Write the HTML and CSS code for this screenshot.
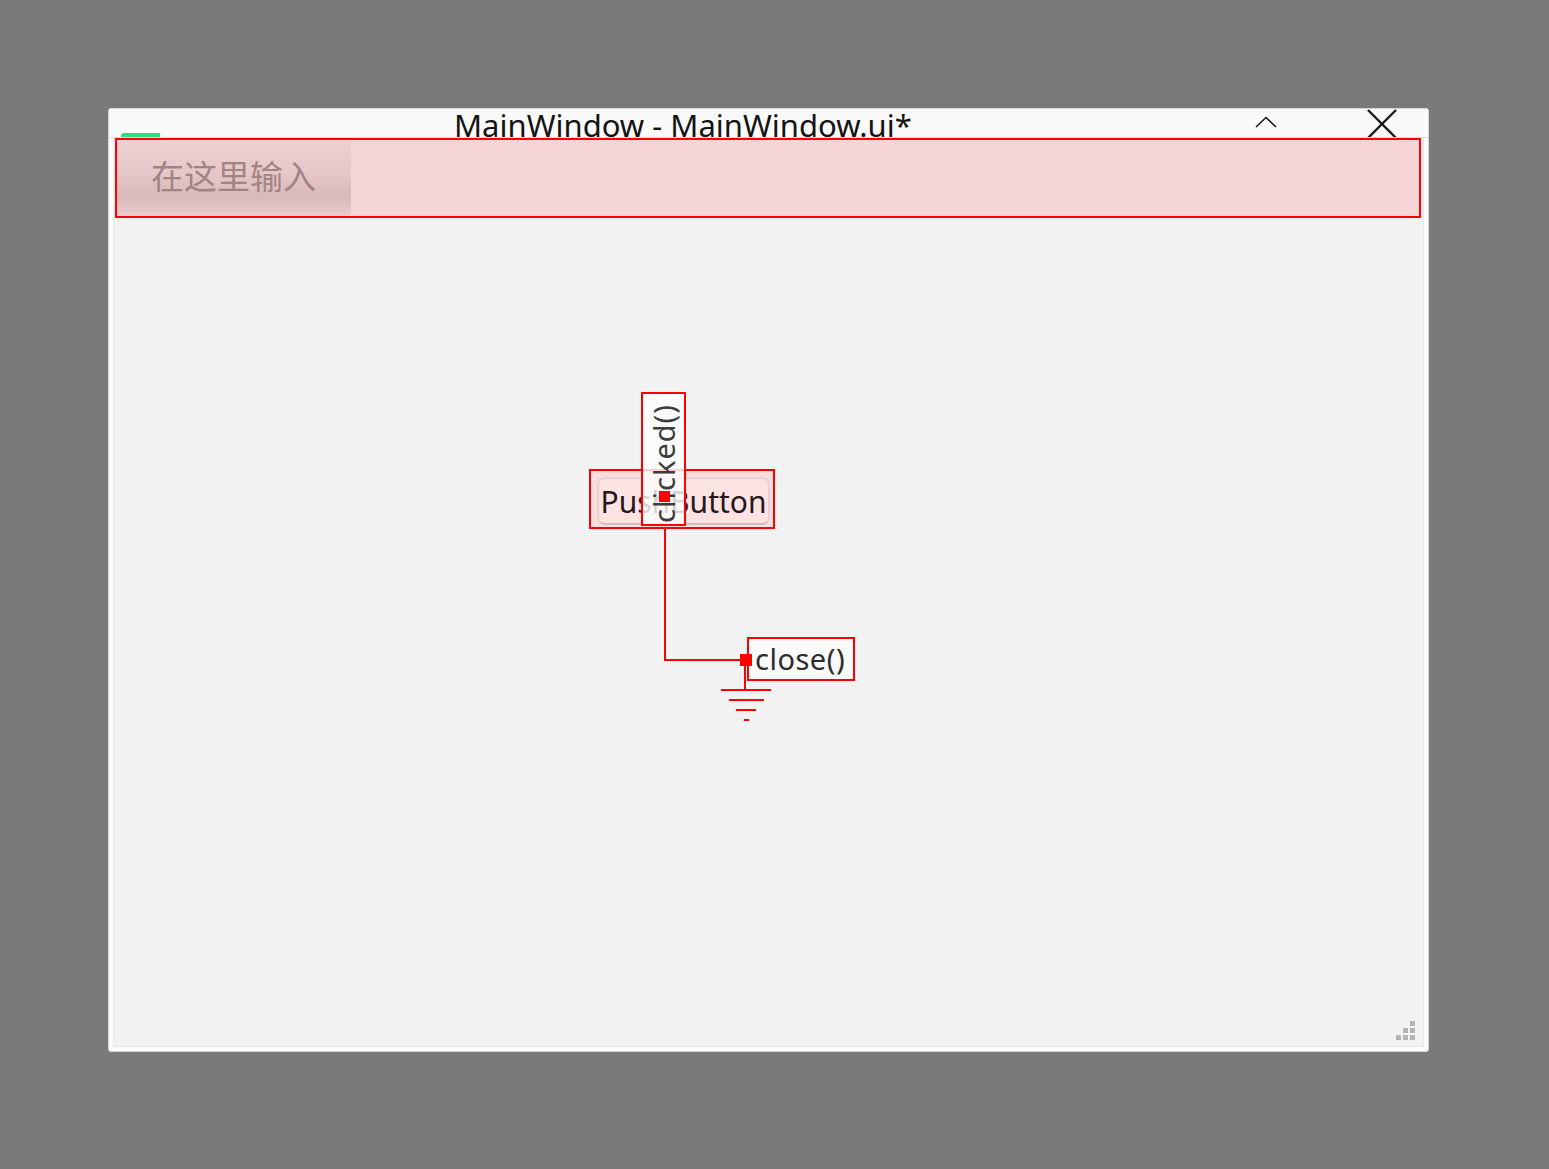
FILE: index.html
```html
<!DOCTYPE html>
<html lang="zh-CN">
<head>
    <meta charset="UTF-8">
    <title>MainWindow - MainWindow.ui*</title>
    <link rel="stylesheet" href="styles.css">
</head>
<body>
    <div class="window">
        <div class="titlebar">
            <span class="app-icon"></span>
            <span class="title">MainWindow - MainWindow.ui*</span>
            <span class="btn-max">
                <svg width="22" height="12" viewBox="0 0 22 12"><path d="M1 11 L11 1.5 L21 11" fill="none" stroke="#1a1a1a" stroke-width="1.6"/></svg>
            </span>
            <span class="btn-close">
                <svg width="30" height="30" viewBox="0 0 30 30"><path d="M1 1 L29 29 M29 1 L1 29" fill="none" stroke="#1a1a1a" stroke-width="2.4"/></svg>
            </span>
        </div>
        <div class="client">
            <div class="menubar">
                <div class="menu-item">在这里输入</div>
            </div>
            <div class="canvas">
                <div class="widget-box">
                    <div class="push-button">PushButton</div>
                </div>
                <div class="signal-label"><span>clicked()</span></div>
                <div class="pin pin-signal"></div>
                <div class="wire wire-v"></div>
                <div class="wire wire-h"></div>
                <div class="slot-label">close()</div>
                <div class="pin pin-slot"></div>
                <svg class="ground" width="52" height="56" viewBox="0 0 52 56">
                    <rect x="23" y="0" width="2" height="25" fill="#ff0000"/>
                    <rect x="0" y="23" width="50" height="2" fill="#ff0000"/>
                    <rect x="8" y="33" width="35" height="2" fill="#ff0000"/>
                    <rect x="15" y="43" width="20" height="2" fill="#ff0000"/>
                    <rect x="23" y="53" width="5" height="2" fill="#ff0000"/>
                </svg>
            </div>
            <svg class="grip" width="20" height="20" viewBox="0 0 20 20">
                <rect x="14" y="0" width="5" height="5" fill="#b4b4b4"/>
                <rect x="7" y="7" width="5" height="5" fill="#b4b4b4"/>
                <rect x="14" y="7" width="5" height="5" fill="#b4b4b4"/>
                <rect x="0" y="14" width="5" height="5" fill="#b4b4b4"/>
                <rect x="7" y="14" width="5" height="5" fill="#b4b4b4"/>
                <rect x="14" y="14" width="5" height="5" fill="#b4b4b4"/>
            </svg>
        </div>
    </div>
</body>
</html>
```

FILE: styles.css
```css
body {
    margin: 0;
    padding: 0;
    background-color: rgb(122, 122, 122);
    font-family: "Noto Sans", "Open Sans", Arial, sans-serif;
    min-height: 100vh;
    overflow: hidden;
}
.window {
    margin: 108px 0 0 108px;
    width: 1321px;
    height: 944px;
    box-sizing: border-box;
    display: flex;
    flex-direction: column;
    background-color: rgb(253, 253, 253);
    border: 1px solid rgb(214, 214, 214);
    border-radius: 3px;
}
.titlebar {
    height: 28px;
    display: flex;
    align-items: flex-end;
    background-color: rgb(250, 250, 250);
    border-bottom: 1px solid rgb(216, 216, 216);
    overflow: hidden;
    flex-shrink: 0;
}
.app-icon {
    width: 39px;
    height: 4px;
    margin-left: 12px;
    background-color: rgb(41, 221, 130);
    border-radius: 3px 0 0 0;
    align-self: flex-end;
}
.title {
    margin-left: 294px;
    font-size: 31px;
    line-height: 34px;
    margin-bottom: -5px;
    color: rgb(20, 20, 20);
    white-space: nowrap;
}
.btn-max {
    margin-left: auto;
    align-self: flex-start;
    margin-top: 7px;
    line-height: 0;
}
.btn-close {
    margin-left: 90px;
    margin-right: 31px;
    align-self: flex-start;
    line-height: 0;
}
.client {
    position: relative;
    flex: 1;
    display: flex;
    flex-direction: column;
    margin: 0 4px 4px 4px;
    background-color: rgb(242, 242, 242);
    border: 1px solid rgb(232, 232, 232);
    border-top: none;
}
.menubar {
    margin: 0 2px 0 1px;
    height: 80px;
    box-sizing: border-box;
    display: flex;
    background-color: rgb(245, 213, 215);
    border: 2px solid rgb(255, 0, 0);
}
.menu-item {
    width: 234px;
    display: flex;
    align-items: center;
    padding: 0 0 6px 34px;
    box-sizing: border-box;
    font-family: "Noto Sans CJK SC", "Noto Sans", sans-serif;
    font-size: 33px;
    color: rgb(163, 132, 133);
    background: linear-gradient(to bottom, rgb(239, 208, 210) 0%, rgb(230, 199, 201) 45%, rgb(216, 184, 185) 75%, rgb(236, 205, 207) 100%);
}
.canvas {
    position: relative;
    flex: 1;
}
.widget-box {
    position: absolute;
    left: 475px;
    top: 251px;
    width: 186px;
    height: 60px;
    box-sizing: border-box;
    border: 2px solid rgb(255, 0, 0);
    background-color: rgb(248, 222, 223);
    padding: 6px 3px 2px 6px;
    display: flex;
}
.push-button {
    flex: 1;
    display: flex;
    align-items: center;
    justify-content: center;
    border: 2px solid rgb(238, 206, 208);
    border-bottom-color: rgb(214, 186, 187);
    border-radius: 8px;
    background-color: rgb(251, 226, 227);
    font-size: 30px;
    color: rgb(40, 22, 24);
    white-space: nowrap;
}
.signal-label {
    position: absolute;
    left: 527px;
    top: 174px;
    width: 45px;
    height: 134px;
    box-sizing: border-box;
    border: 2px solid rgb(255, 0, 0);
    padding-top: 8px;
    background-color: rgba(252, 252, 252, 0.82);
    display: flex;
    align-items: center;
    justify-content: center;
    overflow: hidden;
}
.signal-label span {
    writing-mode: vertical-rl;
    transform: rotate(180deg);
    font-size: 29px;
    letter-spacing: 1px;
    color: rgb(60, 60, 60);
    white-space: nowrap;
}
.pin {
    position: absolute;
    background-color: rgb(255, 0, 0);
}
.pin-signal {
    left: 545px;
    top: 273px;
    width: 11px;
    height: 11px;
}
.pin-slot {
    left: 626px;
    top: 436px;
    width: 12px;
    height: 12px;
}
.wire {
    position: absolute;
    background-color: rgb(255, 0, 0);
}
.wire-v {
    left: 550px;
    top: 311px;
    width: 2px;
    height: 132px;
}
.wire-h {
    left: 550px;
    top: 441px;
    width: 82px;
    height: 2px;
}
.slot-label {
    position: absolute;
    left: 633px;
    top: 419px;
    width: 108px;
    height: 44px;
    box-sizing: border-box;
    border: 2px solid rgb(255, 0, 0);
    background-color: rgb(250, 250, 250);
    padding-left: 6px;
    font-size: 29px;
    letter-spacing: 0.5px;
    line-height: 40px;
    color: rgb(45, 45, 45);
}
.ground {
    position: absolute;
    left: 607px;
    top: 448px;
}
.grip {
    position: absolute;
    right: 7px;
    bottom: 5px;
}
```
